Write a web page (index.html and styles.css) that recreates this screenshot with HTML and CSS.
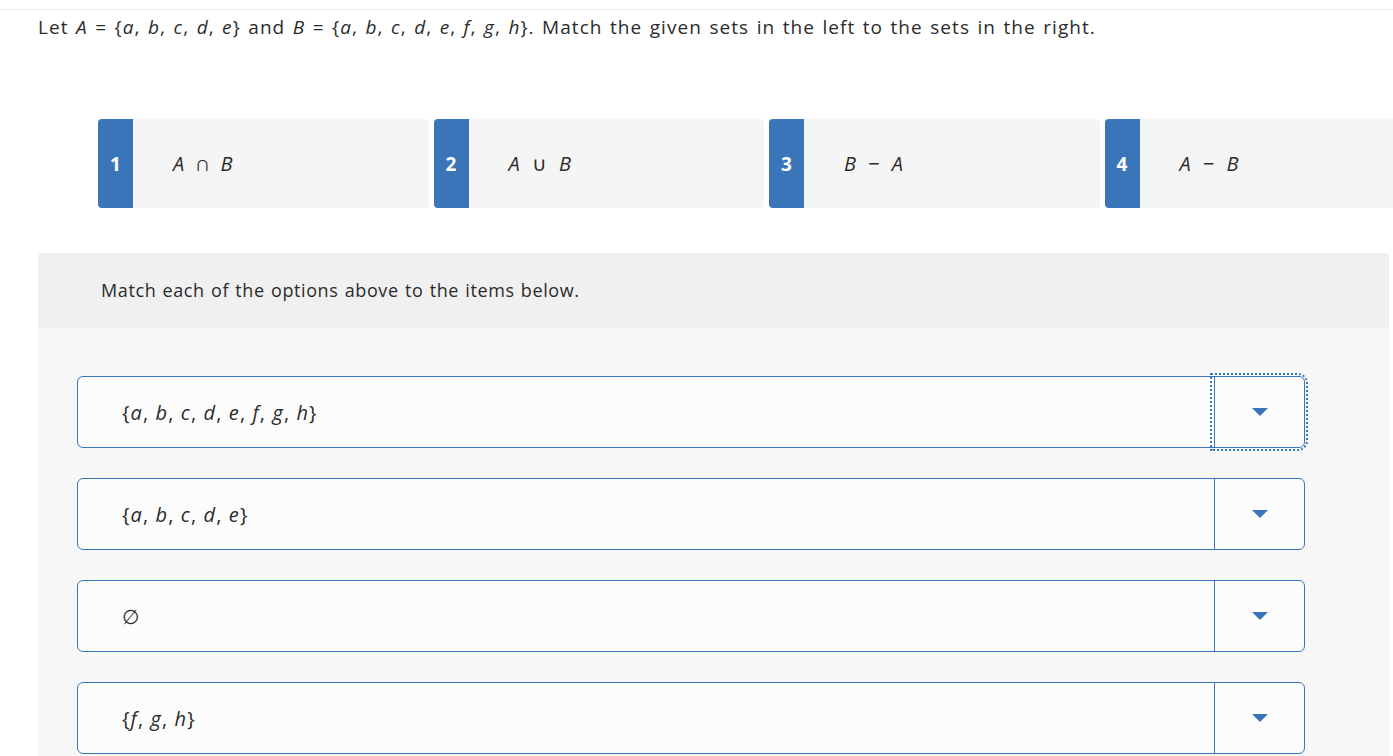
FILE: index.html
```html
<!DOCTYPE html>
<html>
<head>
<meta charset="utf-8">
<link rel="stylesheet" href="styles.css">
</head>
<body>
<div class="page">
  <p class="question">Let <i>A</i> = {<i>a</i>, <i>b</i>, <i>c</i>, <i>d</i>, <i>e</i>} and <i>B</i> = {<i>a</i>, <i>b</i>, <i>c</i>, <i>d</i>, <i>e</i>, <i>f</i>, <i>g</i>, <i>h</i>}. Match the given sets in the left to the sets in the right.</p>

  <div class="options">
    <div class="card"><div class="badge">1</div><div class="label"><span><i>A</i> ∩ <i>B</i></span></div></div>
    <div class="card"><div class="badge">2</div><div class="label"><span><i>A</i> ∪ <i>B</i></span></div></div>
    <div class="card"><div class="badge">3</div><div class="label"><span><i>B</i> − <i>A</i></span></div></div>
    <div class="card"><div class="badge">4</div><div class="label"><span><i>A</i> − <i>B</i></span></div></div>
  </div>

  <div class="panel">
    <div class="panel-head">Match each of the options above to the items below.</div>
    <div class="panel-body">
      <div class="row">
        <div class="row-text"><span>{<i>a</i>, <i>b</i>, <i>c</i>, <i>d</i>, <i>e</i>, <i>f</i>, <i>g</i>, <i>h</i>}</span></div>
        <div class="row-btn focused"><span class="arrow"></span></div>
      </div>
      <div class="row">
        <div class="row-text"><span>{<i>a</i>, <i>b</i>, <i>c</i>, <i>d</i>, <i>e</i>}</span></div>
        <div class="row-btn"><span class="arrow"></span></div>
      </div>
      <div class="row">
        <div class="row-text"><span>∅</span></div>
        <div class="row-btn"><span class="arrow"></span></div>
      </div>
      <div class="row">
        <div class="row-text"><span>{<i>f</i>, <i>g</i>, <i>h</i>}</span></div>
        <div class="row-btn"><span class="arrow"></span></div>
      </div>
    </div>
  </div>
</div>
</body>
</html>
```
FILE: styles.css
```css
html, body {
  margin: 0;
  padding: 0;
  background: #ffffff;
  overflow: hidden;
}
body {
  font-family: "Open Sans", Lato, Arial, sans-serif;
  color: #2b2b2b;
}
.page {
  margin-top: 9px;
  border-top: 1px solid #ececec;
  width: 1500px;
}
.question {
  margin: 0;
  padding: 5px 0 0 38px;
  font-size: 19px;
  line-height: 24px;
  letter-spacing: 1.05px;
  word-spacing: 1.5px;
}
.options {
  display: flex;
  gap: 5px;
  margin: 80px 0 0 98px;
}
.card {
  display: flex;
  width: 330.5px;
  height: 89px;
  flex: none;
  background: #f5f5f5;
  border-radius: 4px;
  overflow: hidden;
}
.card:last-child {
  width: 400px;
}
.badge {
  width: 35px;
  background: #3a75ba;
  color: #fff;
  font-weight: 700;
  font-size: 19px;
  display: flex;
  align-items: center;
  justify-content: center;
}
.label {
  display: flex;
  align-items: center;
  padding-left: 40px;
  font-size: 20px;
  letter-spacing: 1px;
  word-spacing: 5px;
  color: #2b2b2b;
}
.panel {
  margin: 45px 0 0 38px;
  width: 1351px;
}
.panel-head {
  background: #f0f0f0;
  border-radius: 4px 4px 0 0;
  height: 75px;
  box-sizing: border-box;
  padding: 26px 0 0 63px;
  font-size: 18px;
  line-height: 22px;
  letter-spacing: 0.6px;
  word-spacing: 1px;
}
.panel-body {
  background: #f7f7f7;
  padding: 48px 0 40px 39px;
  display: flex;
  flex-direction: column;
  gap: 30px;
}
.row {
  display: flex;
  width: 1228px;
  height: 72px;
  box-sizing: border-box;
  border: 1px solid #3a75ba;
  border-radius: 6px;
  background: #fcfcfc;
}
.row-text {
  flex: 1;
  display: flex;
  align-items: center;
  padding-left: 44px;
  font-size: 20px;
  letter-spacing: 1.1px;
}
.row-btn {
  width: 89px;
  border-left: 1px solid #3a75ba;
  display: flex;
  align-items: center;
  justify-content: center;
  border-radius: 0 6px 6px 0;
}
.row-btn.focused {
  outline: 2px dotted #3a75ba;
  outline-offset: 2px;
}
.arrow {
  width: 0;
  height: 0;
  border-left: 8px solid transparent;
  border-right: 8px solid transparent;
  border-top: 8px solid #3a75ba;
}
```
